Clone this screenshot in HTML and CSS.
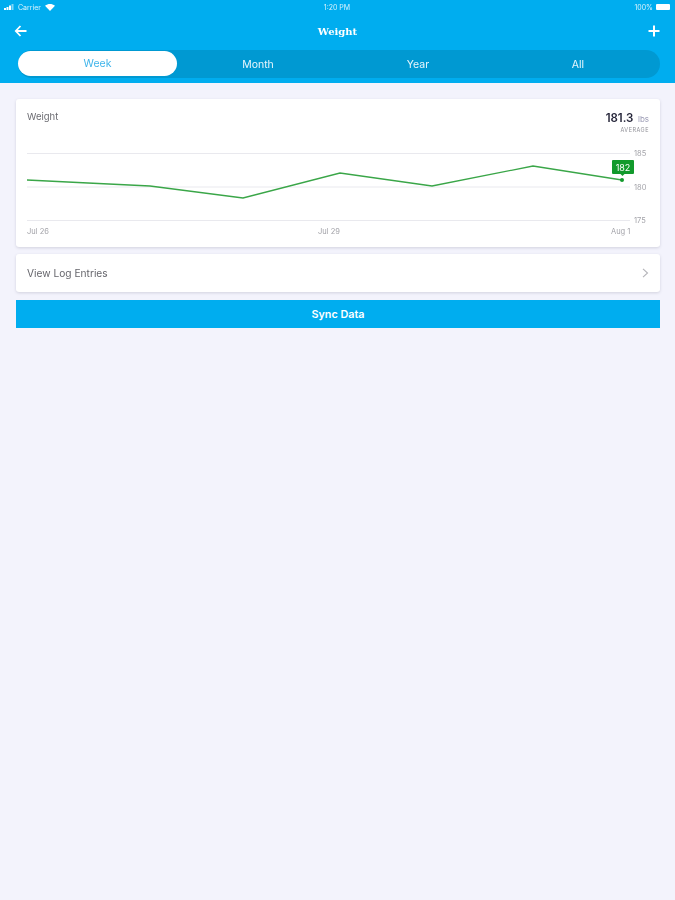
FILE: index.html
```html
<!DOCTYPE html>
<html lang="en">
<head>
    <meta charset="UTF-8">
    <meta name="viewport" content="width=device-width, initial-scale=1.0">
    <title>Weight</title>
    <link rel="stylesheet" href="styles.css">
</head>
<body>
    <header class="top-bar">
        <div class="status-bar">
            <div class="status-left">
                <svg class="signal" width="10" height="6" viewBox="0 0 10 6"><rect x="0" y="4" width="2" height="2"/><rect x="2.5" y="3" width="2" height="3"/><rect x="5" y="1.5" width="2" height="4.5"/><rect x="7.5" y="0" width="2" height="6" opacity="0.5"/></svg>
                <span>Carrier</span>
                <svg class="wifi" width="10" height="7" viewBox="0 0 10 7"><path d="M0 1.8C3 -0.6 7 -0.6 10 1.8L5 7Z"/></svg>
            </div>
            <span class="status-time">1:20 PM</span>
            <div class="status-right">
                <span>100%</span>
                <span class="battery"></span>
            </div>
        </div>
        <div class="nav-bar">
            <svg class="nav-icon" width="14" height="14" viewBox="0 0 14 14"><path d="M12.5 7H2M6.5 2L1.8 7l4.7 5" fill="none" stroke="#fff" stroke-width="1.8"/></svg>
            <h1 class="nav-title">Weight</h1>
            <svg class="nav-icon" width="14" height="14" viewBox="0 0 14 14"><path d="M7 1.5v11M1.5 7h11" fill="none" stroke="#fff" stroke-width="2"/></svg>
        </div>
        <nav class="tabs">
            <a class="tab active">Week</a>
            <a class="tab">Month</a>
            <a class="tab">Year</a>
            <a class="tab">All</a>
        </nav>
    </header>

    <main class="content">
        <section class="card chart-card">
            <div class="chart-head">
                <span class="chart-title">Weight</span>
                <div class="chart-average">
                    <div><span class="average-value">181.3</span> <span class="average-unit">lbs</span></div>
                    <div class="average-label">AVERAGE</div>
                </div>
            </div>
            <svg class="chart" width="644" height="105" viewBox="16 142 644 105">
                <line class="grid" x1="27" y1="153.5" x2="630" y2="153.5"/>
                <line class="grid" x1="27" y1="187" x2="630" y2="187"/>
                <line class="grid" x1="27" y1="220.5" x2="630" y2="220.5"/>
                <text class="axis" x="634" y="156">185</text>
                <text class="axis" x="634" y="190">180</text>
                <text class="axis" x="634" y="223">175</text>
                <text class="axis" x="27" y="234">Jul 26</text>
                <text class="axis" x="318" y="234">Jul 29</text>
                <text class="axis" x="611" y="234">Aug 1</text>
                <polyline class="trend" points="27,180 88,183 150,186 243,198 340,173 432,186 533,166 622,180"/>
                <circle class="trend-dot" cx="622" cy="180" r="2"/>
                <path class="tip" d="M613 160h20a1 1 0 0 1 1 1v12a1 1 0 0 1-1 1h-8.500l-2 2-2-2h-7.500a1 1 0 0 1-1-1v-12a1 1 0 0 1 1-1z"/>
                <text class="tip-text" x="623" y="170.500">182</text>
            </svg>
        </section>

        <a class="card log-row">
            <span>View Log Entries</span>
            <svg width="7" height="10" viewBox="0 0 7 10"><path d="M1 .8L5.500 5 1 9.200" fill="none" stroke="#b4b4b9" stroke-width="1.100"/></svg>
        </a>

        <button class="sync-btn">Sync Data</button>
    </main>
</body>
</html>
```

FILE: styles.css
```css
:root {
    --blue: #00adef;
    --blue-dark: #0099d2;
    --page: #f3f3fc;
    --text: #55555c;
    --muted: #a3a3a9;
    --green: #3aa648;
}

* {
    box-sizing: border-box;
}

body {
    margin: 0;
    height: 900px;
    overflow: hidden;
    background: var(--page);
    font-family: "Inter", "Liberation Sans", sans-serif;
    color: var(--text);
}

/* The reference is a soft, upscaled capture */
.top-bar,
.content {
    filter: blur(0.5px);
}

/* Top bar */
.top-bar {
    height: 83px;
    background: var(--blue);
    color: #fff;
    padding-bottom: 5px;
    display: flex;
    flex-direction: column;
}

.status-bar {
    height: 14px;
    padding: 0 5px 0 4px;
    display: grid;
    grid-template-columns: 1fr auto 1fr;
    align-items: center;
    font-size: 7px;
    color: rgba(255, 255, 255, 0.85);
}

.status-left {
    display: flex;
    align-items: center;
    gap: 4px;
}

.status-left svg {
    fill: #fff;
}

.status-right {
    display: flex;
    align-items: center;
    justify-content: flex-end;
    gap: 3px;
}

.battery {
    width: 14px;
    height: 6px;
    background: #fff;
    border-radius: 1px;
}

.nav-bar {
    height: 36px;
    padding: 0 14px 2px;
    display: flex;
    align-items: center;
    justify-content: space-between;
}

.nav-title {
    margin: 0;
    font-family: "DejaVu Serif", "Liberation Serif", serif;
    font-size: 10px;
    font-weight: 700;
}

.tabs {
    margin: 0 15px 0 18px;
    padding-right: 2px;
    flex: 1;
    display: grid;
    grid-template-columns: repeat(4, 1fr);
    background: var(--blue-dark);
    border-radius: 14px;
}

.tab {
    display: flex;
    align-items: center;
    justify-content: center;
    font-size: 10.5px;
    color: #e8f7fd;
}

.tab.active {
    margin: 1px 1px 2px 0;
    background: #fff;
    color: #3fb4ea;
    border-radius: 13px;
}

/* Content */
.content {
    padding: 16px 15px 0 16px;
    display: flex;
    flex-direction: column;
    gap: 7px;
}

.card {
    background: #fff;
    border-radius: 3px;
    box-shadow: 0 1px 3px rgba(60, 60, 90, 0.18);
}

.chart-card {
    height: 148px;
    display: flex;
    flex-direction: column;
}

.chart-head {
    height: 43px;
    padding: 9px 11px 0;
    display: flex;
    justify-content: space-between;
}

.chart-title {
    margin-top: 3px;
    font-size: 9.5px;
    color: #6c6c72;
}

.chart-average {
    text-align: right;
    line-height: 1;
}

.average-value {
    font-size: 11.5px;
    font-weight: 600;
    color: #26263a;
}

.average-unit {
    font-size: 8px;
    color: #9a9ab4;
}

.average-label {
    margin-top: 3px;
    font-size: 5.5px;
    letter-spacing: 0.5px;
    color: #8f8f96;
}

.chart {
    display: block;
    flex-shrink: 0;
}

.grid {
    stroke: #e9e9ee;
    stroke-width: 1;
}

.axis {
    font-size: 7.5px;
    fill: var(--muted);
}

.trend {
    fill: none;
    stroke: var(--green);
    stroke-width: 1.300;
}

.trend-dot,
.tip {
    fill: #129a2c;
}

.tip-text {
    font-size: 9px;
    fill: #fff;
    text-anchor: middle;
}

.log-row {
    height: 38px;
    padding: 0 11px;
    display: flex;
    align-items: center;
    justify-content: space-between;
    font-size: 10.2px;
    color: #66666c;
}

.sync-btn {
    margin-top: 1px;
    height: 28px;
    border: none;
    background: var(--blue);
    color: #fff;
    font-family: inherit;
    font-size: 10.8px;
    font-weight: 600;
}
```
